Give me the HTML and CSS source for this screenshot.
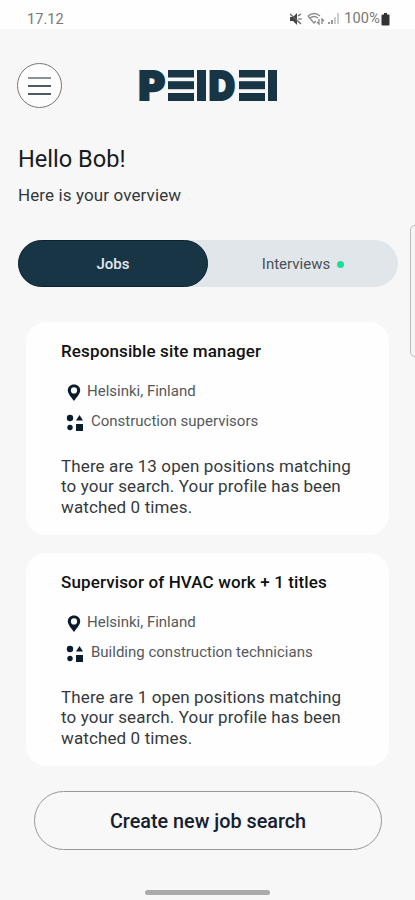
FILE: index.html
```html
<!DOCTYPE html>
<html lang="en">
<head>
<meta charset="utf-8">
<title>Peidei</title>
<link rel="stylesheet" href="styles.css">
</head>
<body>
<svg class="defs" aria-hidden="true">
  <symbol id="pin" viewBox="0 0 14 18"><path fill-rule="evenodd" d="M7 .5C3.300.5.8 3 .8 6.300.8 10 4.500 13.500 7 17c2.500-3.500 6.200-7 6.200-10.700C13.200 3 10.700.5 7 .5ZM7 3.300a3.100 3.100 0 1 1 0 6.200 3.100 3.100 0 0 1 0-6.200Z"/></symbol>
  <symbol id="shapes" viewBox="0 0 18 18"><circle cx="4" cy="4" r="3.200"/><path d="M13.500 1 17 6.500h-7Z"/><circle cx="4" cy="13.500" r="2.700"/><path d="M10 10h7v7h-7Z"/></symbol>
</svg>
<div class="status">
  <span class="time">17.12</span>
  <svg class="signals" width="64" height="16" viewBox="0 0 64 16">
    <path fill="#444" d="M1 6h3l4-4v12l-4-4H1Z"/>
    <path fill="none" stroke="#666" stroke-width="1.200" d="M1 3l11 10M9 5l3-2M9 8h4M10 11l2 2"/>
    <path fill="none" stroke="#888" stroke-width="1.300" d="M19 5q6-5 12 0M21 7q4-3 8 0M19 5l6 7 2-2M30 8v5l-2-2M33 13V8l2 2"/>
    <path fill="#999" d="M39 11h2v2h-2zM42 9h2v4h-2z"/>
    <path fill="#ccc" d="M45 6h2v7h-2zM48 2h2v11h-2z"/>
  </svg>
  <span class="percent">100%</span>
  <svg class="battery" width="9" height="13" viewBox="0 0 9 13"><path d="M3 0h3v1.500h1.500q1 0 1 1v9q0 1-1 1h-6q-1 0-1-1v-9q0-1 1-1H3Z"/></svg>
</div>
<header class="top">
  <button class="menu" aria-label="Menu"><i></i><i></i><i></i></button>
  <svg class="logo" width="150" height="62" viewBox="-5 -14 150 62" role="img" aria-label="PEIDEI">
    <g class="letters">
      <text transform="translate(-.6 31) scale(1.010 1)">P</text>
      <text transform="translate(69.800 31) scale(.91 1)">D</text>
    </g>
    <g class="bars">
      <rect x="29" y="1" width="26" height="7.500"/><rect x="29" y="12.200" width="26" height="8"/><rect x="29" y="24" width="26" height="8"/>
      <rect x="58" y="1" width="9" height="31"/>
      <rect x="100" y="1" width="26" height="7.500"/><rect x="100" y="12.200" width="26" height="8"/><rect x="100" y="24" width="26" height="8"/>
      <rect x="129" y="1" width="9" height="31"/>
    </g>
  </svg>
</header>
<main>
  <h1>Hello Bob!</h1>
  <p class="intro">Here is your overview</p>
  <nav class="tabs">
    <a class="tab active"><span>Jobs</span></a>
    <a class="tab"><span>Interviews</span><i class="dot"></i></a>
  </nav>
  <section class="card">
    <h2>Responsible site manager</h2>
    <div class="row place"><svg width="14" height="18"><use href="#pin"/></svg><span>Helsinki, Finland</span></div>
    <div class="row field"><svg width="18" height="18"><use href="#shapes"/></svg><span>Construction supervisors</span></div>
    <p class="copy">There are 13 open positions matching<br>to your search. Your profile has been<br>watched 0 times.</p>
  </section>
  <section class="card">
    <h2>Supervisor of HVAC work + 1 titles</h2>
    <div class="row place"><svg width="14" height="18"><use href="#pin"/></svg><span>Helsinki, Finland</span></div>
    <div class="row field"><svg width="18" height="18"><use href="#shapes"/></svg><span>Building construction technicians</span></div>
    <p class="copy">There are 1 open positions matching<br>to your search. Your profile has been<br>watched 0 times.</p>
  </section>
  <button class="create">Create new job search</button>
</main>
<div class="home"></div>
<div class="edge"></div>
</body>
</html>
```

FILE: styles.css
```css
* { box-sizing: border-box; }
body {
  margin: 0;
  position: relative;
  width: 415px;
  height: 900px;
  overflow: hidden;
  background: #f7f7f7;
  color: #181b1e;
  font-family: Roboto, sans-serif;
  white-space: nowrap;
}
.defs { position: absolute; width: 0; height: 0; }
.status {
  display: flex;
  align-items: center;
  height: 29px;
  padding: 9px 25px 0 27px;
  background: #fefefe;
  color: #777;
  font-size: 15px;
  line-height: 20px;
}
.time { font-size: 14.600px; }
.signals { margin-left: auto; }
.percent { font-size: 14.500px; letter-spacing: .2px; margin-right: 1px; margin-left: -9px; }
.battery { fill: #333; }
.top { display: flex; padding: 34px 0 0 17px; height: 115px; }
.menu {
  display: flex;
  flex-direction: column;
  align-items: center;
  justify-content: center;
  gap: 6px;
  width: 45px;
  height: 45px;
  padding: 0;
  border: 1px solid #777;
  border-radius: 50%;
  background: #fdfdfd;
}
.menu i { width: 23px; height: 2px; background: #4c5b66; }
.menu i:first-child { background: #89929a; }
.logo { margin: -8px 0 0 72px; }
.letters { font: 900 40px Inter, sans-serif; fill: #183545; stroke: #183545; stroke-width: 2px; }
.bars { fill: #183545; }
h1 { margin: 0; padding-left: 18px; font-size: 23.600px; font-weight: 400; line-height: 30px; }
.intro { margin: 9px 0 0 18px; font-size: 17px; letter-spacing: .11px; line-height: 24px; color: #33373a; }
.tabs {
  display: flex;
  width: 380px;
  height: 47px;
  margin: 33px 0 0 18px;
  border-radius: 24px;
  background: #e0e6ea;
}
.tab {
  display: flex;
  align-items: center;
  justify-content: center;
  width: 190px;
  padding-top: 1px;
  border-radius: 24px;
  font-size: 15px;
  color: #4a5054;
}
.tab.active { background: #183545; border: 1px solid #0a2130; color: #e4e8eb; font-weight: 500; }
.dot { width: 7px; height: 7px; margin-left: 7px; border-radius: 50%; background: #1ddd94; }
.card {
  width: 363px;
  height: 213px;
  margin: 35px 0 0 26px;
  padding: 19px 0 0 35px;
  border-radius: 20px;
  background: #fefefe;
}
.card + .card { margin-top: 18px; }
h2 { margin: 0; font-size: 17px; font-weight: 500; letter-spacing: .13px; line-height: 20px; color: #111; }
.row { display: flex; align-items: center; height: 20px; font-size: 15px; color: #55595c; }
.row svg { fill: #0b1c2a; }
.place { margin-top: 20px; padding-left: 6px; gap: 6px; }
.field { margin-top: 10px; padding-left: 5px; gap: 7px; }
.place svg, .field svg { position: relative; top: 2px; }
.copy { margin: 25px 0 0; font-size: 17px; letter-spacing: .12px; line-height: 20.300px; color: #36393c; }
.create {
  display: block;
  width: 348px;
  height: 59px;
  margin: 25px 0 0 34px;
  padding: 2px 0 0;
  border: 1px solid #999;
  border-radius: 30px;
  background: #f8f8f8;
  color: #14202e;
  font: 500 19.800px Roboto, sans-serif;
}
.home { width: 125px; height: 5px; margin: 40px 0 0 145px; border-radius: 3px; background: #aaa; }
.edge {
  position: absolute;
  top: 225px;
  left: 410px;
  width: 10px;
  height: 132px;
  border: 1px solid #bbb;
  border-radius: 6px;
  background: #f5f5f5;
}
```
